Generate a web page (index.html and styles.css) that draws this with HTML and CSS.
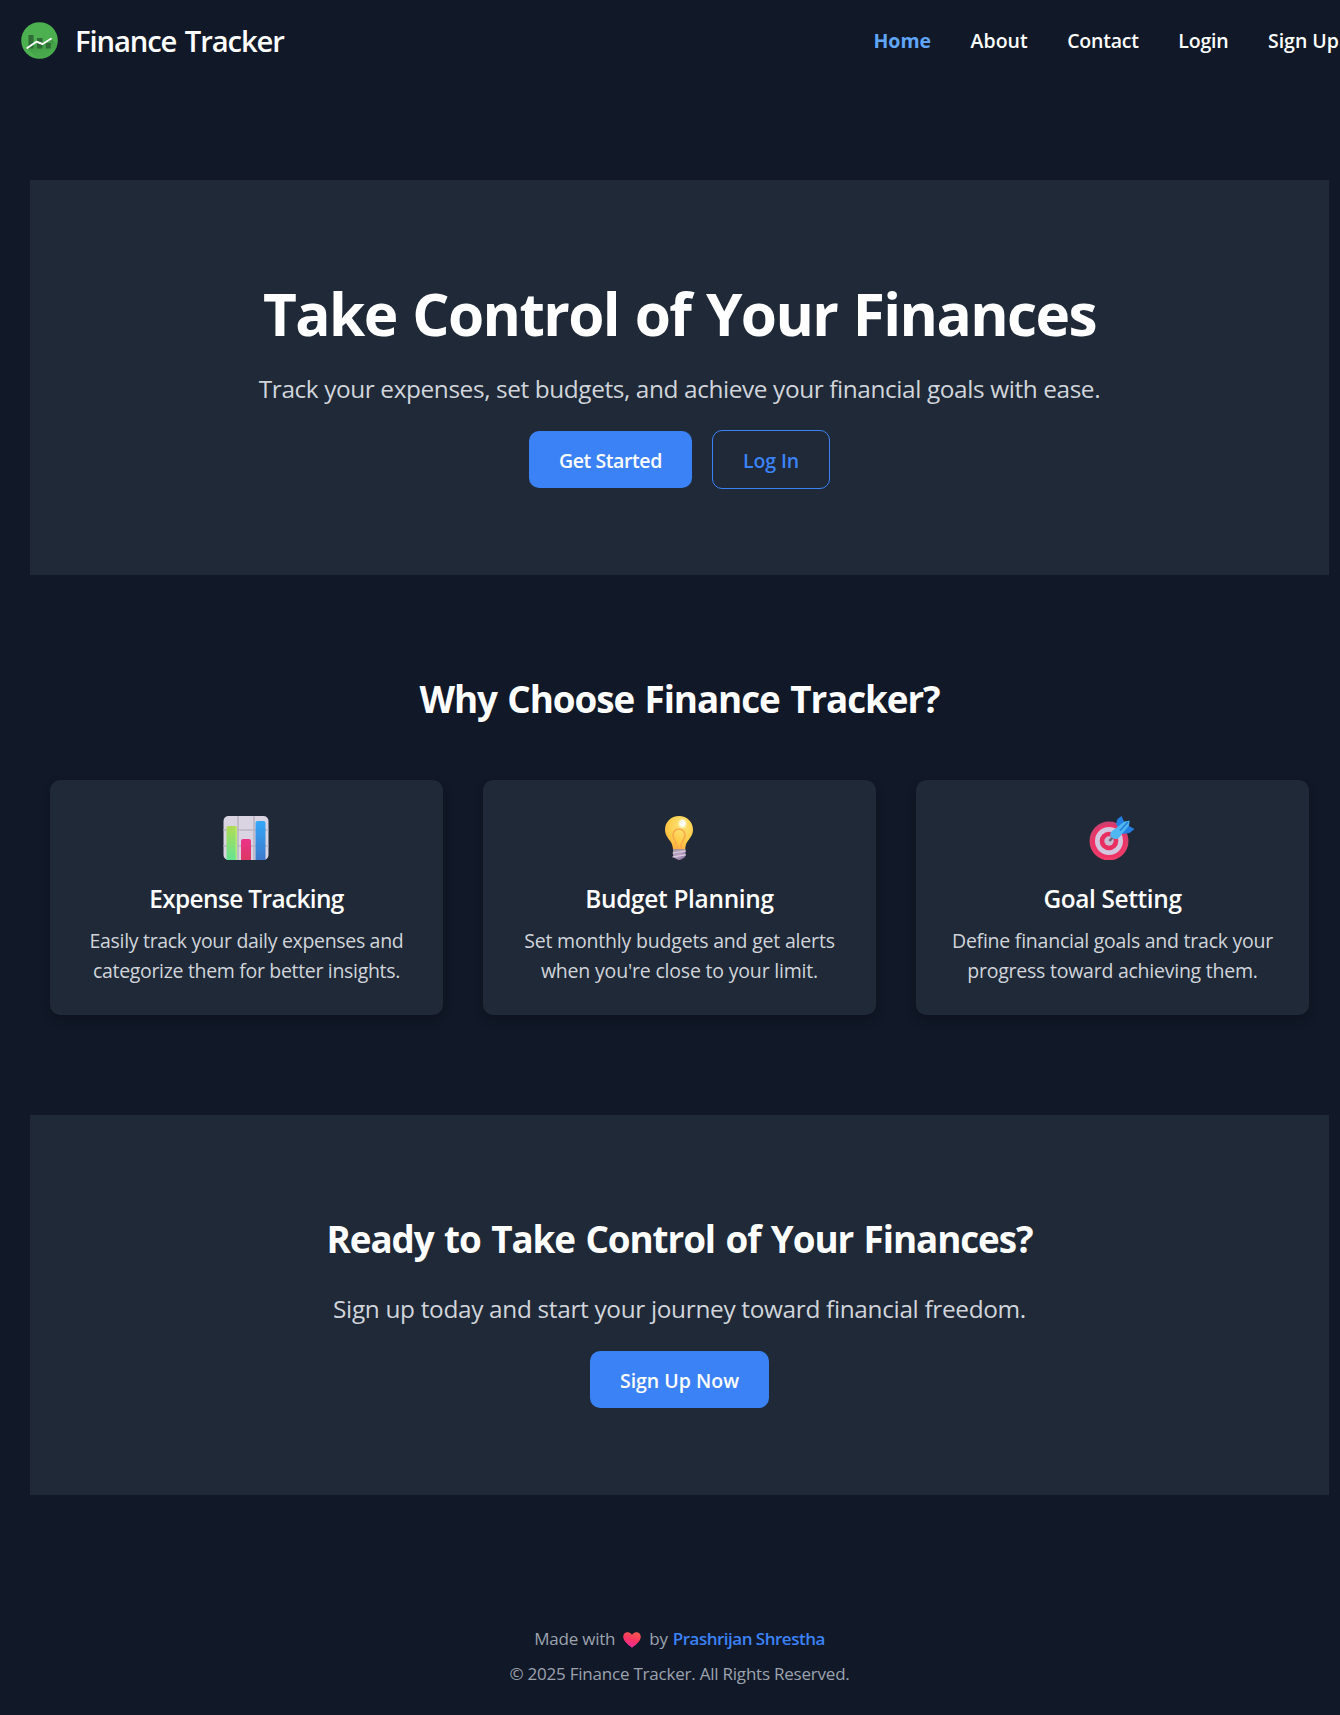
FILE: index.html
```
<!DOCTYPE html>
<html lang="en">
<head>
<meta charset="utf-8">
<title>Finance Tracker</title>
<link rel="stylesheet" href="styles.css">
</head>
<body>
<header class="navbar">
  <a class="brand">
    <svg class="logo" viewBox="0 0 37 37">
      <defs>
        <linearGradient id="fade" x1="0" y1="0" x2=".4" y2="1"><stop offset="0" stop-color="#2f7d34" stop-opacity=".75"/><stop offset="1" stop-color="#43a047" stop-opacity=".2"/></linearGradient>
        <clipPath id="disc"><circle cx="18.5" cy="18.5" r="18.3"/></clipPath>
      </defs>
      <circle cx="18.5" cy="18.5" r="18.3" fill="#4caf50"/>
      <path d="M6 26 30.500 17l7 7v13H17z" fill="url(#fade)" clip-path="url(#disc)"/>
      <path d="M7.500 13h5v13.500h-5zM16 16h5.500v10.500H16zM24.800 21h5v5.500h-5z" fill="#2e6b35"/>
      <path d="m6.300 26 9-6.300 6.300 2.300L30 16.700" fill="none" stroke="#fff" stroke-width="1.900" stroke-linecap="round" stroke-linejoin="round"/>
    </svg>
    <span class="brand-name">Finance Tracker</span>
  </a>
  <nav class="links">
    <a class="active">Home</a><a>About</a><a class="tight">Contact</a><a class="tight">Login</a><a>Sign Up</a>
  </nav>
</header>
<main class="page">
  <section class="hero">
    <h1>Take Control of Your Finances</h1>
    <p class="lead lead-hero">Track your expenses, set budgets, and achieve your financial goals with ease.</p>
    <div class="actions">
      <a class="btn btn-start">Get Started</a>
      <a class="btn btn-outline">Log In</a>
    </div>
  </section>
  <section class="features">
    <h2>Why Choose Finance Tracker?</h2>
    <div class="cards">
      <article class="card">
        <svg class="icon" viewBox="0 0 46 50">
          <defs>
            <linearGradient id="green" x1="0" y1="0" x2="0" y2="1"><stop offset="0" stop-color="#b0dc55"/><stop offset="1" stop-color="#65e492"/></linearGradient>
            <linearGradient id="blue" x1="0" y1="0" x2="0" y2="1"><stop offset="0" stop-color="#35a7f8"/><stop offset="1" stop-color="#3d79cc"/></linearGradient>
            <linearGradient id="pink" x1="0" y1="0" x2="0" y2="1"><stop offset="0" stop-color="#ec3389"/><stop offset="1" stop-color="#db3864"/></linearGradient>
          </defs>
          <rect x=".5" y="6" width="45" height="44" rx="5" fill="#dad4e2"/>
          <path d="M15 6v44M31 6v44M.5 20h45M.5 36h45" stroke="#bbb4c3" stroke-width="1.600"/>
          <path d="M3.500 50V18q0-2 2-2h6.500q2 0 2 2v32z" fill="url(#green)"/>
          <path d="M12.500 17v33h1.500V18z" fill="#cdf07a" opacity=".6"/>
          <path d="M18 50V31q0-2 2-2h6q2 0 2 2v19z" fill="url(#pink)"/>
          <path d="M32.500 50V13q0-2 2-2h6q2 0 2 2v37z" fill="url(#blue)"/>
        </svg>
        <h3>Expense Tracking</h3>
        <p>Easily track your daily expenses and<br>categorize them for better insights.</p>
      </article>
      <article class="card">
        <svg class="icon" viewBox="0 0 46 50">
          <defs>
            <radialGradient id="glass" cx=".6" cy=".3" r=".75"><stop offset="0" stop-color="#ffe678"/><stop offset=".6" stop-color="#ffcd4c"/><stop offset="1" stop-color="#fcae3b"/></radialGradient>
            <radialGradient id="shine"><stop offset="0" stop-color="#fff"/><stop offset=".5" stop-color="#fff" stop-opacity=".9"/><stop offset="1" stop-color="#fff3a8" stop-opacity="0"/></radialGradient>
            <linearGradient id="cap" x1="0" y1="0" x2="1" y2="1"><stop offset="0" stop-color="#a99aa9"/><stop offset=".5" stop-color="#b5a4c0"/><stop offset="1" stop-color="#80609c"/></linearGradient>
          </defs>
          <path d="M23 6c8 0 14 6 14 13.500 0 5.500-3 8.500-5.500 12-1.700 2.400-2 5-2.300 8H17c-.3-3-.8-5.600-2.500-8C12 28 9 25 9 19.500 9 12 15 6 23 6z" fill="url(#glass)"/>
          <path d="M21.300 39c-.2-8-4.300-9.500-4.300-14a6 6 0 0 1 12 0c0 4.500-4.100 6-4.300 14" fill="none" stroke="#fca94b" stroke-width="1.700"/>
          <ellipse cx="26.500" cy="13.500" rx="5.200" ry="5.800" fill="url(#shine)"/>
          <path d="M17 39.300h12.500v5.200c0 2-1 3.600-2.600 4-.9.300-1.500 1.500-3.600 1.500s-2.800-1.200-3.700-1.500c-1.600-.4-2.600-2-2.600-4z" fill="url(#cap)"/>
          <path d="m17 43 12.500-2M17 46.800l12.500-2" stroke="#ddcde2" stroke-width="1.200" stroke-linecap="round"/>
        </svg>
        <h3>Budget Planning</h3>
        <p>Set monthly budgets and get alerts<br>when you're close to your limit.</p>
      </article>
      <article class="card">
        <svg class="icon" viewBox="0 0 46 50">
          <defs><linearGradient id="ring" x1="0" y1="0" x2="0" y2="1"><stop offset="0" stop-color="#c94170"/><stop offset="1" stop-color="#f03c68"/></linearGradient>
          <clipPath id="base"><path d="M0 0h46v50H0z"/></clipPath></defs>
          <g clip-path="url(#base)">
            <circle cx="20" cy="31" r="19.500" fill="url(#ring)"/>
            <circle cx="20" cy="31" r="16.500" fill="#f03366"/>
            <circle cx="20" cy="31" r="14" fill="#d2c7df"/>
            <circle cx="20" cy="31" r="9.300" fill="#e92f62"/>
            <circle cx="20" cy="31" r="4.700" fill="#c7bcd3"/>
          </g>
          <path d="m20.500 31 3-3.500" stroke="#6c6473" stroke-width="2.600"/>
          <path d="m27 14 1.500-5L32.500 6l3 6.500 5-2-.5 5.500 5.500 3-5 4-7 1z" fill="#237fe2"/>
          <path d="M22.500 21.500 35.500 11.500l5-.8-.8 5-9.700 12c-2.500 2.500-8 .8-8.700-2.200-.3-1.500.2-3.100 1.200-4z" fill="#4fb8f2"/>
          <path d="m31 20.500 8-8.500" stroke="#257fd9" stroke-width="1.800"/>
        </svg>
        <h3>Goal Setting</h3>
        <p>Define financial goals and track your<br>progress toward achieving them.</p>
      </article>
    </div>
  </section>
  <section class="cta">
    <h2>Ready to Take Control of Your Finances?</h2>
    <p class="lead">Sign up today and start your journey toward financial freedom.</p>
    <a class="btn">Sign Up Now</a>
  </section>
</main>
<footer class="footer">
  <p class="made"><span>Made with</span>
    <svg class="heart" viewBox="0 0 18 16"><defs><linearGradient id="love" x1=".7" y1="0" x2=".4" y2="1"><stop offset="0" stop-color="#ff5a50"/><stop offset=".5" stop-color="#fc3560"/><stop offset="1" stop-color="#e92aa0"/></linearGradient></defs><path d="M9 3C10.200.8 12-.1 14 .2c2.700.4 4 2.700 3.700 5.300C17.200 9.500 12.500 13.200 9.700 15.200q-.7.500-1.400 0C5.500 13.200.8 9.500.3 5.500 0 2.900 1.300.6 4 .2 6-.1 7.800.8 9 3z" fill="url(#love)"/></svg>
    <span>by</span><a class="author">Prashrijan Shrestha</a></p>
  <p class="copy">© 2025 Finance Tracker. All Rights Reserved.</p>
</footer>
</body>
</html>
```
FILE: styles.css
```
* { box-sizing: border-box; margin: 0; padding: 0; }
html { overflow: hidden; background: #111827; }
body { width: 1359px; color: #fff; font-family: "Open Sans", "Noto Sans", sans-serif; font-size: 19.5px; line-height: 30px; }
a { color: inherit; text-decoration: none; }

.navbar { display: flex; justify-content: space-between; align-items: center; height: 80px; padding: 0 20px 0 21px; }
.brand { display: flex; align-items: center; gap: 16px; }
.logo { width: 37px; height: 37px; }
.brand-name { font-size: 29.2px; font-weight: 600; line-height: 45px; letter-spacing: -1.1px; word-spacing: 2px; padding: 2px 0 0 1px; }
.links { display: flex; gap: 39.5px; font-weight: 600; padding-top: 2px; white-space: nowrap; }
.links .active { color: #60a5fa; font-weight: 700; }
.links .tight { letter-spacing: -0.2px; }

.page { padding: 100px 30px 0; }
.hero, .cta { display: flex; flex-direction: column; align-items: center; height: 395px; padding-top: 100px; background: #1f2937; text-align: center; }
.cta { height: 380px; }
h1 { font-size: 58.5px; font-weight: 700; line-height: 60px; letter-spacing: -1.6px; word-spacing: 2px; padding-top: 3px; margin-bottom: 28px; }
h2 { font-size: 36.8px; font-weight: 700; line-height: 45px; letter-spacing: -1.08px; word-spacing: 2px; text-align: center; padding-top: 2px; }
.lead { font-size: 24.4px; line-height: 35px; letter-spacing: -0.33px; color: #d1d5db; white-space: nowrap; }
.lead-hero { letter-spacing: -0.4px; margin-bottom: 24px; }
.actions { display: flex; align-items: center; gap: 20px; }
.btn { height: 57px; padding: 15px 30px 12px; border-radius: 10px; background: #3b82f6; font-weight: 600; line-height: 30px; }
.btn-start { letter-spacing: -0.4px; }
.btn-outline { height: 59px; border: 1px solid #3b82f6; background: none; color: #3b82f6; letter-spacing: -0.1px; }

.features { padding: 100px 20px; }
.cards { display: grid; grid-template-columns: repeat(3, 1fr); gap: 40px; margin-top: 58px; }
.card { display: flex; flex-direction: column; align-items: center; height: 235px; padding-top: 30px; border-radius: 10px; background: #1f2937; box-shadow: 0 4px 6px -1px rgba(0, 0, 0, .1), 0 5px 12px rgba(0, 0, 0, .1); text-align: center; }
.icon { width: 46px; height: 50px; margin: 0 1px 21px 0; }
h3 { font-size: 24.4px; font-weight: 600; line-height: 35px; letter-spacing: -0.62px; margin-bottom: 10px; }
.card p { color: #d1d5db; letter-spacing: -0.32px; }
.card:nth-child(2) h3 { letter-spacing: -0.31px; }
.card:nth-child(2) p { letter-spacing: -0.19px; }
.card:nth-child(3) h3 { letter-spacing: -0.35px; }
.card:nth-child(3) p { letter-spacing: -0.24px; }

.cta h2 { margin-bottom: 29px; }
.cta .btn { margin-top: 25px; }

.footer { display: flex; flex-direction: column; align-items: center; gap: 10px; padding-top: 131px; color: #9ca3af; font-size: 17px; line-height: 25px; letter-spacing: -0.22px; }
.made { display: flex; align-items: center; }
.heart { width: 18px; height: 16px; margin: 2px 8px 0; }
.author { margin-left: 5px; color: #3b82f6; font-weight: 600; letter-spacing: -0.5px; }
```
